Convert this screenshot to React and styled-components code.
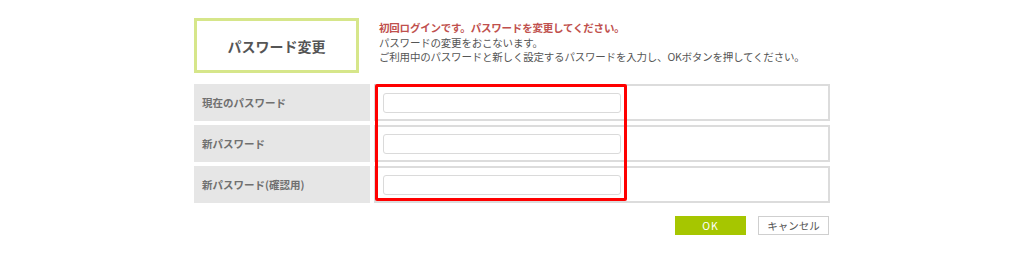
import React from 'react';
import styled, { createGlobalStyle } from 'styled-components';

const GlobalStyle = createGlobalStyle`
  html, body {
    margin: 0;
    padding: 0;
    background: #fff;
  }
  body {
    font-family: "Noto Sans CJK JP", "Noto Sans", sans-serif;
    color: #555;
  }
`;

const Page = styled.div`
  width: 636px;
  margin: 0 auto;
  padding-top: 18px;
`;

const Header = styled.div`
  display: flex;
  align-items: flex-start;
  gap: 20px;
`;

const TitleBox = styled.div`
  width: 159px;
  height: 49px;
  border: 3px solid #d6e68a;
  display: flex;
  align-items: center;
  justify-content: center;
  font-size: 14px;
  font-weight: bold;
  color: #555;
  flex-shrink: 0;
`;

const Messages = styled.div`
  padding-top: 3px;
  font-size: 10.5px;
  letter-spacing: -0.2px;
  line-height: 14.5px;
  color: #555;
  white-space: nowrap;
`;

const Alert = styled.div`
  color: #c0504d;
  font-weight: bold;
`;

const Table = styled.div`
  position: relative;
  margin-top: 11px;
  display: flex;
  flex-direction: column;
  gap: 4px;
`;

const Row = styled.div`
  display: flex;
  gap: 4px;
  height: 37px;
`;

const Label = styled.div`
  width: 176px;
  background: #e6e6e6;
  display: flex;
  align-items: center;
  padding-left: 8px;
  box-sizing: border-box;
  font-size: 10.5px;
  font-weight: bold;
  color: #707070;
`;

const Cell = styled.div`
  flex: 1;
  border: 2px solid #dcdcdc;
  box-sizing: border-box;
  display: flex;
  align-items: center;
  padding-left: 7px;
`;

const Input = styled.input`
  width: 238px;
  height: 20px;
  box-sizing: border-box;
  border: 1px solid #dadada;
  border-radius: 3px;
  background: #fff;
  outline: none;
`;

const Highlight = styled.div`
  position: absolute;
  left: 181px;
  top: 0;
  width: 252px;
  height: 117px;
  border: 3px solid #ff0000;
  border-radius: 2px;
  box-sizing: border-box;
  pointer-events: none;
`;

const Actions = styled.div`
  display: flex;
  justify-content: flex-end;
  gap: 12px;
  margin-top: 13px;
  padding-right: 1px;
`;

const Button = styled.button`
  width: 71px;
  height: 19px;
  box-sizing: border-box;
  font-family: inherit;
  font-size: 10.5px;
  padding: 0;
  cursor: pointer;
  border: ${p => (p.$primary ? 'none' : '1px solid #cfcfcf')};
  background: ${p => (p.$primary ? '#a6c600' : '#fff')};
  color: ${p => (p.$primary ? '#fff' : '#555')};
  letter-spacing: ${p => (p.$primary ? '1px' : '0')};
`;

const fields = ['現在のパスワード', '新パスワード', '新パスワード(確認用)'];

export default function App() {
  return (
    <>
      <GlobalStyle />
      <Page>
        <Header>
          <TitleBox>パスワード変更</TitleBox>
          <Messages>
            <Alert>初回ログインです。パスワードを変更してください。</Alert>
            <div>パスワードの変更をおこないます。</div>
            <div>ご利用中のパスワードと新しく設定するパスワードを入力し、OKボタンを押してください。</div>
          </Messages>
        </Header>
        <Table>
          {fields.map(f => (
            <Row key={f}>
              <Label>{f}</Label>
              <Cell><Input type="password" /></Cell>
            </Row>
          ))}
          <Highlight />
        </Table>
        <Actions>
          <Button $primary>OK</Button>
          <Button>キャンセル</Button>
        </Actions>
      </Page>
    </>
  );
}
